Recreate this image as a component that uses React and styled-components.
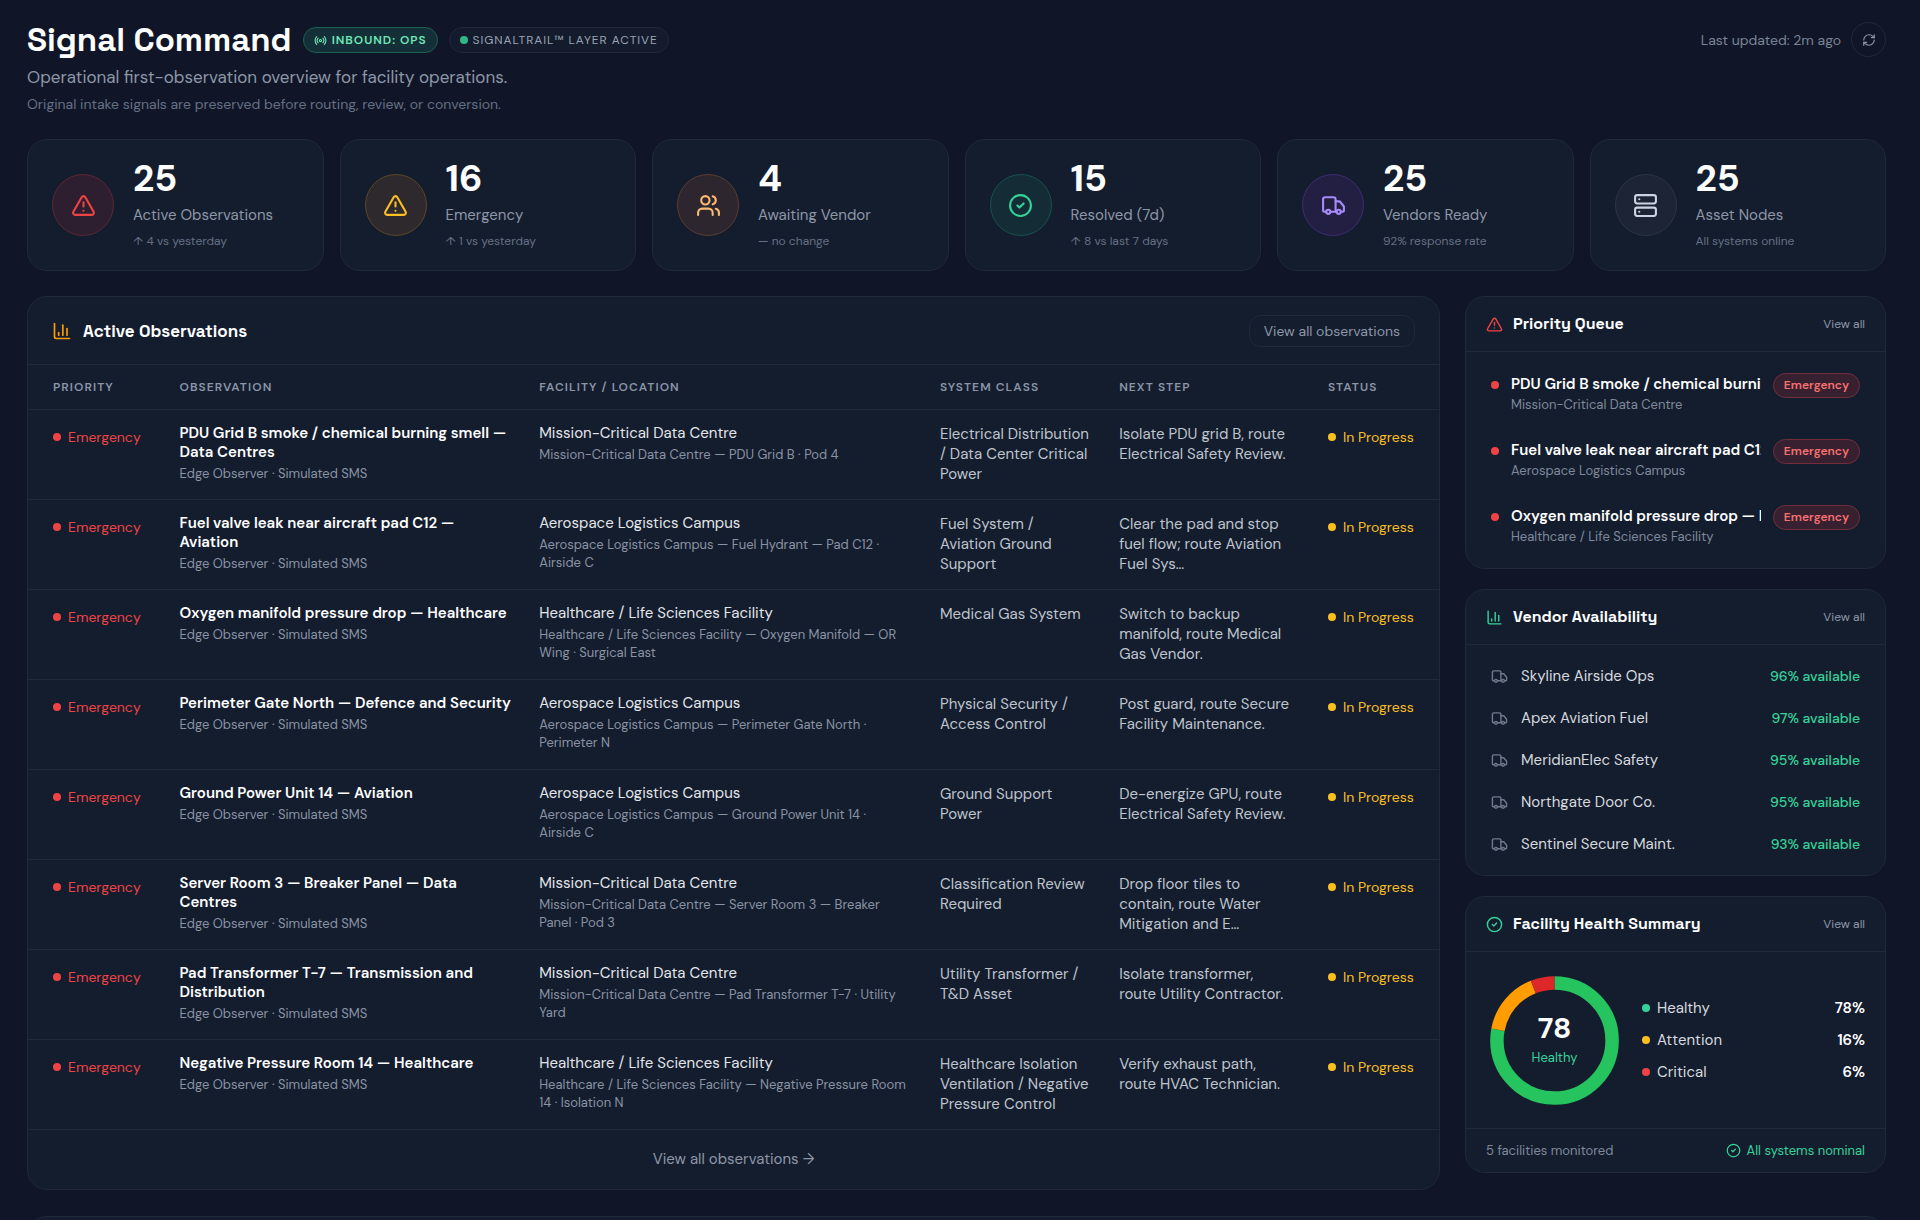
import React from "react";
import styled, { createGlobalStyle } from "styled-components";
import {
  TriangleAlert,
  Users,
  CircleCheck,
  Truck,
  Server,
  Radio,
  RefreshCw,
  ChartColumn,
} from "lucide-react";

const body = `"DM Sans", Inter, "Noto Sans", sans-serif`;
const display = `"Space Grotesk", "DM Sans", Inter, "Noto Sans", sans-serif`;

const c = {
  page: "#101628",
  card: "#141d2e",
  line: "#1f293a",
  white: "#ffffff",
  soft: "#d6d9de",
  text: "#bfc4cd",
  muted: "#8d96a7",
  dim: "#667084",
  red: "#ef4444",
  amber: "#fbbf24",
  green: "#34d399",
};

const Global = createGlobalStyle`
  *, *::before, *::after { box-sizing: border-box; }
  body { margin: 0; background: ${c.page}; color: ${c.white}; font-family: ${body}; font-size: 15px; line-height: 20px; }
  h1, h2, p, ul { margin: 0; padding: 0; }
  ul { list-style: none; }
  a { color: inherit; text-decoration: none; }
  button { font: inherit; cursor: pointer; }
  svg { flex: none; display: block; }
`;

const Page = styled.main`
  height: 100vh;
  overflow: hidden;
  padding: 22px 34px 0 27px;
`;

const Header = styled.header`
  display: flex;
  justify-content: space-between;
  align-items: flex-start;
  margin-bottom: 25px;
`;

const TitleRow = styled.div`
  display: flex;
  align-items: center;
  gap: 11px;
  height: 36px;
`;

const Title = styled.h1`
  font-family: ${display};
  font-size: 33px;
  line-height: 36px;
  font-weight: 700;
`;

const Pill = styled.span`
  display: inline-flex;
  align-items: center;
  gap: 5px;
  height: 26px;
  padding: 0 10px;
  border-radius: 13px;
  border: 1px solid ${(p) => (p.$live ? "#1c6153" : c.line)};
  background: ${(p) => (p.$live ? "#142f38" : "#131b2d")};
  color: ${(p) => (p.$live ? "#6ee7b7" : "#9aa3b3")};
  font-size: 12px;
  font-weight: ${(p) => (p.$live ? 600 : 400)};
  letter-spacing: 0.08em;
  white-space: nowrap;
`;

const Dot = styled.span`
  flex: none;
  width: 8px;
  height: 8px;
  border-radius: 50%;
  background: ${(p) => p.$color};
`;

const Subtitle = styled.p`
  margin-top: 7px;
  font-size: 17px;
  line-height: 24px;
  color: ${c.muted};
`;

const Note = styled.p`
  margin-top: 5px;
  font-size: 14px;
  line-height: 20px;
  color: ${c.dim};
`;

const Updated = styled.div`
  display: flex;
  align-items: center;
  gap: 10px;
  font-size: 14px;
  color: #7b8496;
`;

const RoundButton = styled.button`
  display: grid;
  place-items: center;
  width: 35px;
  height: 35px;
  padding: 0;
  border-radius: 50%;
  border: 1px solid ${c.line};
  background: transparent;
  color: ${c.muted};
`;

const Stats = styled.section`
  display: grid;
  grid-template-columns: repeat(6, 1fr);
  gap: 16px;
  margin-bottom: 25px;
`;

const StatCard = styled.article`
  display: flex;
  align-items: center;
  gap: 19px;
  height: 132px;
  padding: 0 24px;
  border: 1px solid ${c.line};
  border-radius: 20px;
  background: ${c.card};
`;

const Medallion = styled.span`
  flex: none;
  display: grid;
  place-items: center;
  width: 62px;
  height: 62px;
  border-radius: 50%;
  color: ${(p) => p.$tone.fg};
  background: ${(p) => p.$tone.bg};
  border: 1px solid ${(p) => p.$tone.line};
`;

const StatText = styled.div`
  display: flex;
  flex-direction: column;
  min-width: 0;
  padding-bottom: 4px;
`;

const StatValue = styled.strong`
  font-size: 37px;
  line-height: 44px;
  font-weight: 700;
`;

const StatLabel = styled.span`
  margin-top: 4px;
  font-size: 15px;
  line-height: 22px;
  color: ${c.muted};
`;

const StatNote = styled.span`
  margin-top: 5px;
  font-size: 12px;
  line-height: 20px;
  color: ${c.dim};
`;

const Columns = styled.div`
  display: grid;
  grid-template-columns: minmax(0, 1fr) 421px;
  align-items: start;
  gap: 25px;
  margin-bottom: 26px;
`;

const Panel = styled.section`
  border: 1px solid ${c.line};
  border-radius: 20px;
  background: ${c.card};
  overflow: hidden;
`;

const NextPanel = styled(Panel)`
  height: 240px;
`;

const PanelHead = styled.header`
  display: flex;
  align-items: center;
  gap: ${(p) => (p.$large ? 11 : 10)}px;
  height: ${(p) => (p.$large ? 68 : 55)}px;
  padding: 0 ${(p) => (p.$large ? 24 : 20)}px;
  border-bottom: 1px solid ${c.line};
  color: ${(p) => p.$color};
`;

const PanelTitle = styled.h2`
  flex: 1;
  font-family: ${display};
  font-size: ${(p) => (p.$large ? 17 : 16)}px;
  line-height: 24px;
  font-weight: 600;
  color: ${c.white};
`;

const OutlineButton = styled.button`
  height: 32px;
  padding: 0 14px;
  border: 1px solid ${c.line};
  border-radius: 12px;
  background: transparent;
  color: ${c.muted};
  font-size: 14px;
`;

const SmallLink = styled.a`
  font-size: 12px;
  color: ${c.muted};
`;

const Table = styled.table`
  width: 100%;
  table-layout: fixed;
  border-collapse: collapse;
  text-align: left;
`;

const Col = styled.col`
  width: ${(p) => p.$w};
`;

const Th = styled.th`
  height: 44px;
  padding: 0 16px;
  border-bottom: 1px solid ${c.line};
  font-size: 12px;
  font-weight: 600;
  letter-spacing: 0.09em;
  color: #8b95a7;
  white-space: nowrap;
  &:first-child { padding-left: 25px; }
`;

const Td = styled.td`
  height: 90px;
  padding: 14px ${(p) => p.$end ?? 16}px 0 16px;
  vertical-align: top;
  border-bottom: 1px solid ${c.line};
  &:first-child { padding-left: 25px; }
`;

const Flag = styled.span`
  display: flex;
  align-items: center;
  gap: 7px;
  margin-top: 3px;
  font-size: 14px;
  line-height: 20px;
  color: ${(p) => p.$color};
  white-space: nowrap;
`;

const RowTitle = styled.div`
  font-size: 15px;
  line-height: 19px;
  font-weight: ${(p) => (p.$strong ? 600 : 400)};
  color: ${(p) => (p.$strong ? c.white : "#e3e5e9")};
`;

const RowNote = styled.div`
  margin-top: 3px;
  font-size: 13px;
  line-height: 18px;
  color: #8a93a4;
`;

const CellText = styled.div`
  font-size: 15px;
  line-height: 20px;
  color: ${c.text};
`;

const PanelFoot = styled.footer`
  display: flex;
  align-items: center;
  justify-content: center;
  height: 59px;
`;

const MoreLink = styled.a`
  font-size: 15px;
  color: ${c.muted};
`;

const Side = styled.aside`
  display: flex;
  flex-direction: column;
  gap: 20px;
`;

const List = styled.ul`
  padding: ${(p) => (p.$tight ? 9 : 10)}px 25px;
`;

const QueueItem = styled.li`
  display: grid;
  grid-template-columns: 8px minmax(0, 1fr) auto;
  column-gap: 12px;
  height: 66px;
  padding: 12px 0 0;
  & > ${Dot} { margin-top: 8px; }
`;

const QueueTitle = styled.div`
  font-size: 15px;
  line-height: 22px;
  font-weight: 600;
  white-space: nowrap;
  overflow: hidden;
`;

const QueueNote = styled.div`
  font-size: 13px;
  line-height: 20px;
  color: #7f899b;
`;

const Tag = styled.span`
  height: 25px;
  padding: 0 10px;
  border: 1px solid #722f3b;
  border-radius: 13px;
  background: #37202f;
  color: #f87171;
  font-size: 12px;
  line-height: 23px;
  font-weight: 600;
`;

const VendorItem = styled.li`
  display: flex;
  align-items: center;
  gap: 13px;
  height: 42px;
  color: #6f798c;
`;

const VendorName = styled.span`
  flex: 1;
  font-size: 15px;
  color: ${c.soft};
`;

const VendorRate = styled.span`
  font-size: 14px;
  font-weight: 500;
  color: ${c.green};
`;

const Health = styled.div`
  display: flex;
  align-items: center;
  gap: 23px;
  height: 176px;
  padding: 0 20px 0 24px;
`;

const Gauge = styled.div`
  display: grid;
  flex: none;
  place-items: center;
  & > * { grid-area: 1 / 1; }
`;

const GaugeText = styled.div`
  display: flex;
  flex-direction: column;
  align-items: center;
  font-size: 13px;
  line-height: 24px;
  color: ${c.green};
`;

const GaugeValue = styled.strong`
  font-size: 29px;
  line-height: 36px;
  color: ${c.white};
`;

const Legend = styled.ul`
  flex: 1;
`;

const LegendItem = styled.li`
  display: flex;
  align-items: center;
  gap: 7px;
  height: 32px;
  font-size: 15px;
  color: ${c.soft};
`;

const LegendValue = styled.strong`
  margin-left: auto;
  font-weight: 600;
  color: ${c.white};
`;

const HealthFoot = styled.footer`
  display: flex;
  align-items: center;
  justify-content: space-between;
  height: 44px;
  padding: 0 20px;
  border-top: 1px solid ${c.line};
  font-size: 13px;
  color: #7f899b;
`;

const Nominal = styled.span`
  display: flex;
  align-items: center;
  gap: 6px;
  color: ${c.green};
`;

const tones = {
  red: { fg: "#ef4444", bg: "#2d1f30", line: "#5b2735" },
  yellow: { fg: "#fbbf24", bg: "#2d292d", line: "#5d4724" },
  orange: { fg: "#fdba74", bg: "#2d262f", line: "#5b3d2f" },
  green: { fg: "#34d399", bg: "#142c36", line: "#16514c" },
  violet: { fg: "#a78bfa", bg: "#231f42", line: "#3d2c70" },
  gray: { fg: "#cbd5e1", bg: "#1c2436", line: "#2a3445" },
};

const stats = [
  { icon: TriangleAlert, tone: "red", value: 25, label: "Active Observations", note: "↑ 4 vs yesterday" },
  { icon: TriangleAlert, tone: "yellow", value: 16, label: "Emergency", note: "↑ 1 vs yesterday" },
  { icon: Users, tone: "orange", value: 4, label: "Awaiting Vendor", note: "— no change" },
  { icon: CircleCheck, tone: "green", value: 15, label: "Resolved (7d)", note: "↑ 8 vs last 7 days" },
  { icon: Truck, tone: "violet", value: 25, label: "Vendors Ready", note: "92% response rate" },
  { icon: Server, tone: "gray", value: 25, label: "Asset Nodes", note: "All systems online" },
];

const columns = [
  ["Priority", "9.6%"],
  ["Observation", "25.5%"],
  ["Facility / Location", "28.4%"],
  ["System Class", "12.7%"],
  ["Next Step", "14.8%"],
  ["Status", "auto"],
];

const DC = "Mission-Critical Data Centre";
const AL = "Aerospace Logistics Campus";
const HC = "Healthcare / Life Sciences Facility";

const rows = [
  ["PDU Grid B smoke / chemical burning smell — Data Centres", DC, "PDU Grid B · Pod 4", "Electrical Distribution / Data Center Critical Power", "Isolate PDU grid B, route Electrical Safety Review."],
  ["Fuel valve leak near aircraft pad C12 — Aviation", AL, "Fuel Hydrant — Pad C12 · Airside C", "Fuel System / Aviation Ground Support", "Clear the pad and stop fuel flow; route Aviation Fuel Sys…"],
  ["Oxygen manifold pressure drop — Healthcare", HC, "Oxygen Manifold — OR Wing · Surgical East", "Medical Gas System", "Switch to backup manifold, route Medical Gas Vendor."],
  ["Perimeter Gate North — Defence and Security", AL, "Perimeter Gate North · Perimeter N", "Physical Security / Access Control", "Post guard, route Secure Facility Maintenance."],
  ["Ground Power Unit 14 — Aviation", AL, "Ground Power Unit 14 · Airside C", "Ground Support Power", "De-energize GPU, route Electrical Safety Review."],
  ["Server Room 3 — Breaker Panel — Data Centres", DC, "Server Room 3 — Breaker Panel · Pod 3", "Classification Review Required", "Drop floor tiles to contain, route Water Mitigation and E…"],
  ["Pad Transformer T-7 — Transmission and Distribution", DC, "Pad Transformer T-7 · Utility Yard", "Utility Transformer / T&D Asset", "Isolate transformer, route Utility Contractor."],
  ["Negative Pressure Room 14 — Healthcare", HC, "Negative Pressure Room 14 · Isolation N", "Healthcare Isolation Ventilation / Negative Pressure Control", "Verify exhaust path, route HVAC Technician."],
];

const vendors = [
  ["Skyline Airside Ops", 96],
  ["Apex Aviation Fuel", 97],
  ["MeridianElec Safety", 95],
  ["Northgate Door Co.", 95],
  ["Sentinel Secure Maint.", 93],
];

const health = [
  { label: "Healthy", value: 78, dot: c.green, arc: "#25c45f" },
  { label: "Attention", value: 16, dot: c.amber, arc: "#ff9c00" },
  { label: "Critical", value: 6, dot: c.red, arc: "#dc2828" },
];

function Donut() {
  let start = 0;
  return (
    <svg width="129" height="129" viewBox="0 0 129 129" aria-hidden="true">
      <g transform="rotate(-90 64.5 64.5)" fill="none" strokeWidth="13.5">
        {health.map((h) => {
          const offset = -start;
          start += h.value;
          return (
            <circle
              key={h.label}
              cx="64.5"
              cy="64.5"
              r="57.6"
              pathLength="100"
              stroke={h.arc}
              strokeDasharray={`${h.value} ${100 - h.value}`}
              strokeDashoffset={offset}
            />
          );
        })}
      </g>
    </svg>
  );
}

function SideHead({ icon: Icon, color, title }) {
  return (
    <PanelHead $color={color}>
      <Icon size={17} />
      <PanelTitle>{title}</PanelTitle>
      <SmallLink href="#">View all</SmallLink>
    </PanelHead>
  );
}

export default function App() {
  return (
    <Page>
      <Global />
      <Header>
        <div>
          <TitleRow>
            <Title>Signal Command</Title>
            <Pill $live>
              <Radio size={13} />
              INBOUND: OPS
            </Pill>
            <Pill>
              <Dot $color="#2eb886" />
              SIGNALTRAIL™ LAYER ACTIVE
            </Pill>
          </TitleRow>
          <Subtitle>Operational first-observation overview for facility operations.</Subtitle>
          <Note>Original intake signals are preserved before routing, review, or conversion.</Note>
        </div>
        <Updated>
          Last updated: 2m ago
          <RoundButton aria-label="Refresh">
            <RefreshCw size={14} />
          </RoundButton>
        </Updated>
      </Header>

      <Stats>
        {stats.map((s) => (
          <StatCard key={s.label}>
            <Medallion $tone={tones[s.tone]}>
              <s.icon size={25} strokeWidth={2} />
            </Medallion>
            <StatText>
              <StatValue>{s.value}</StatValue>
              <StatLabel>{s.label}</StatLabel>
              <StatNote>{s.note}</StatNote>
            </StatText>
          </StatCard>
        ))}
      </Stats>

      <Columns>
        <Panel>
          <PanelHead $large $color="#ff9c00">
            <ChartColumn size={20} />
            <PanelTitle $large>Active Observations</PanelTitle>
            <OutlineButton>View all observations</OutlineButton>
          </PanelHead>
          <Table>
            <colgroup>
              {columns.map(([name, w]) => (
                <Col key={name} $w={w} />
              ))}
            </colgroup>
            <thead>
              <tr>
                {columns.map(([name]) => (
                  <Th key={name} scope="col">{name.toUpperCase()}</Th>
                ))}
              </tr>
            </thead>
            <tbody>
              {rows.map(([title, site, spot, system, next]) => (
                <tr key={title}>
                  <Td>
                    <Flag $color={c.red}>
                      <Dot $color={c.red} />
                      Emergency
                    </Flag>
                  </Td>
                  <Td $end={10}>
                    <RowTitle $strong>{title}</RowTitle>
                    <RowNote>Edge Observer · Simulated SMS</RowNote>
                  </Td>
                  <Td>
                    <RowTitle>{site}</RowTitle>
                    <RowNote>{`${site} — ${spot}`}</RowNote>
                  </Td>
                  <Td $end={11}>
                    <CellText>{system}</CellText>
                  </Td>
                  <Td $end={20}>
                    <CellText>{next}</CellText>
                  </Td>
                  <Td $end={0}>
                    <Flag $color={c.amber}>
                      <Dot $color={c.amber} />
                      In Progress
                    </Flag>
                  </Td>
                </tr>
              ))}
            </tbody>
          </Table>
          <PanelFoot>
            <MoreLink href="#">View all observations →</MoreLink>
          </PanelFoot>
        </Panel>

        <Side>
          <Panel>
            <SideHead icon={TriangleAlert} color={c.red} title="Priority Queue" />
            <List $tight>
              {rows.slice(0, 3).map(([title, site]) => (
                <QueueItem key={title}>
                  <Dot $color={c.red} />
                  <div>
                    <QueueTitle>{title}</QueueTitle>
                    <QueueNote>{site}</QueueNote>
                  </div>
                  <Tag>Emergency</Tag>
                </QueueItem>
              ))}
            </List>
          </Panel>

          <Panel>
            <SideHead icon={ChartColumn} color={c.green} title="Vendor Availability" />
            <List>
              {vendors.map(([name, rate]) => (
                <VendorItem key={name}>
                  <Truck size={17} />
                  <VendorName>{name}</VendorName>
                  <VendorRate>{rate}% available</VendorRate>
                </VendorItem>
              ))}
            </List>
          </Panel>

          <Panel>
            <SideHead icon={CircleCheck} color={c.green} title="Facility Health Summary" />
            <Health>
              <Gauge>
                <Donut />
                <GaugeText>
                  <GaugeValue>78</GaugeValue>
                  Healthy
                </GaugeText>
              </Gauge>
              <Legend>
                {health.map((h) => (
                  <LegendItem key={h.label}>
                    <Dot $color={h.dot} />
                    {h.label}
                    <LegendValue>{h.value}%</LegendValue>
                  </LegendItem>
                ))}
              </Legend>
            </Health>
            <HealthFoot>
              5 facilities monitored
              <Nominal>
                <CircleCheck size={15} />
                All systems nominal
              </Nominal>
            </HealthFoot>
          </Panel>
        </Side>
      </Columns>

      <NextPanel />
    </Page>
  );
}
